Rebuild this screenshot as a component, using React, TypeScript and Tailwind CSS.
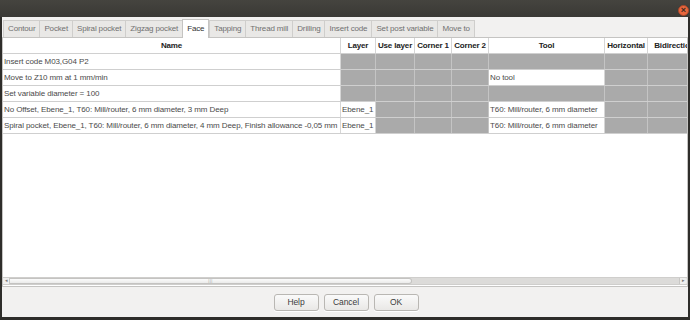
const tabs = [
  "Contour",
  "Pocket",
  "Spiral pocket",
  "Zigzag pocket",
  "Face",
  "Tapping",
  "Thread mill",
  "Drilling",
  "Insert code",
  "Set post variable",
  "Move to",
];

const columns = [
  { label: "Name", w: "w-[338px]" },
  { label: "Layer", w: "w-[35px]" },
  { label: "Use layer", w: "w-[39px]" },
  { label: "Corner 1", w: "w-[37px]" },
  { label: "Corner 2", w: "w-[37px]" },
  { label: "Tool", w: "w-[116px]" },
  { label: "Horizontal", w: "w-[43px]" },
  { label: "Bidirectional", w: "w-[60px]" },
];

type Cell = string | null; // null = disabled (grey)

const rows: Cell[][] = [
  ["Insert code M03,G04 P2", null, null, null, null, null, null, null],
  ["Move to Z10 mm at 1 mm/min", null, null, null, null, "No tool", null, null],
  ["Set variable diameter = 100", null, null, null, null, null, null, null],
  [
    "No Offset, Ebene_1, T60: Mill/router, 6 mm diameter, 3 mm Deep",
    "Ebene_1",
    null,
    null,
    null,
    "T60: Mill/router, 6 mm diameter",
    null,
    null,
  ],
  [
    "Spiral pocket, Ebene_1, T60: Mill/router, 6 mm diameter, 4 mm Deep, Finish allowance -0,05 mm",
    "Ebene_1",
    null,
    null,
    null,
    "T60: Mill/router, 6 mm diameter",
    null,
    null,
  ],
];

function Button({ label }: { label: string }) {
  return (
    <button className="w-[45px] h-[17px] rounded-[3px] border border-[#b9b7b3] bg-gradient-to-b from-[#fafafa] to-[#e9e8e6] text-[#3c3c3c] text-[8.5px] tracking-[-0.1px] leading-none shadow-[0_1px_0_#ffffff]">
      {label}
    </button>
  );
}

export default function App() {
  return (
    <div
      className="w-[690px] h-[320px] bg-[#2e2d2a] flex flex-col overflow-hidden text-[#3c3c3c]"
      style={{ fontFamily: '"Liberation Sans", Arial, sans-serif' }}
    >
      {/* title bar */}
      <div className="h-[17px] shrink-0 flex items-end justify-end pr-[1px] bg-gradient-to-b from-[#45443f] to-[#3a3935]">
        <div className="w-[11px] h-[11px] mb-[1px] rounded-full bg-[#e9673d] border border-[#a9472a] flex items-center justify-center text-[#3a2a22] text-[9px] leading-none font-bold">
          ×
        </div>
      </div>

      <div className="flex-1 flex flex-col mx-[2px] mb-[3px] bg-[#f2f1f0]">
        {/* tabs */}
        <div className="h-[20px] shrink-0 flex items-end pl-[1px]">
          {tabs.map((t) =>
            t === "Face" ? (
              <div
                key={t}
                className="h-[19px] px-[4px] flex items-center bg-white border border-b-0 border-[#c5c4c2] text-[#333] text-[8px] tracking-[-0.15px] -mb-[1px] relative z-10"
              >
                {t}
              </div>
            ) : (
              <div
                key={t}
                className="h-[17px] px-[4px] flex items-center bg-[#e9e8e6] border border-b-0 border-r-0 border-[#cfcecc] text-[#707070] text-[8px] tracking-[-0.15px] last:border-r"
              >
                {t}
              </div>
            )
          )}
        </div>

        {/* table */}
        <div className="flex-1 flex flex-col bg-white border border-[#c5c4c2] overflow-hidden">
          <div className="flex-1 overflow-hidden">
            <div className="flex h-[16px] border-b border-[#d0d0d0]">
              {columns.map((c) => (
                <div
                  key={c.label}
                  className={`${c.w} shrink-0 border-r border-[#d6d6d6] flex items-center justify-center font-bold text-[8px] tracking-[-0.15px] text-[#222] whitespace-nowrap overflow-hidden`}
                >
                  {c.label}
                </div>
              ))}
            </div>
            {rows.map((r, i) => (
              <div key={i} className="flex h-[16px] border-b border-[#cfcfcf]">
                {r.map((cell, j) =>
                  cell === null ? (
                    <div
                      key={j}
                      className={`${columns[j].w} shrink-0 bg-[#aaaaaa] border-r border-[#c4c4c4]`}
                    />
                  ) : (
                    <div
                      key={j}
                      className={`${columns[j].w} shrink-0 border-r border-[#d6d6d6] flex items-center pl-[1px] text-[8px] tracking-[-0.1px] text-[#4a4a4a] whitespace-nowrap overflow-hidden`}
                    >
                      {cell}
                    </div>
                  )
                )}
              </div>
            ))}
          </div>

          {/* horizontal scrollbar */}
          <div className="h-[8px] shrink-0 mb-[1px] flex items-stretch bg-[#dcdbd9] border-y border-[#cfcecc]">
            <div className="w-[7px] flex items-center justify-center text-[5px] text-[#777] bg-[#efefee] border-r border-[#c8c7c5]">
              ◂
            </div>
            <div className="w-[402px] rounded-r-[4px] bg-gradient-to-b from-[#fbfbfb] to-[#ebebea] border border-l-0 border-[#c4c3c1] flex items-center justify-center">
              <span className="text-[4px] text-[#999] leading-none tracking-[0.5px]">|||</span>
            </div>
            <div className="flex-1" />
            <div className="w-[8px] flex items-center justify-center text-[5px] text-[#777] bg-[#efefee] border-l border-[#c8c7c5] rounded-r-[2px]">
              ▸
            </div>
          </div>
        </div>

        {/* footer */}
        <div className="h-[30px] shrink-0 flex items-center justify-center gap-[5px] pt-[1px] pl-[2px]">
          <Button label="Help" />
          <Button label="Cancel" />
          <Button label="OK" />
        </div>
      </div>
    </div>
  );
}
